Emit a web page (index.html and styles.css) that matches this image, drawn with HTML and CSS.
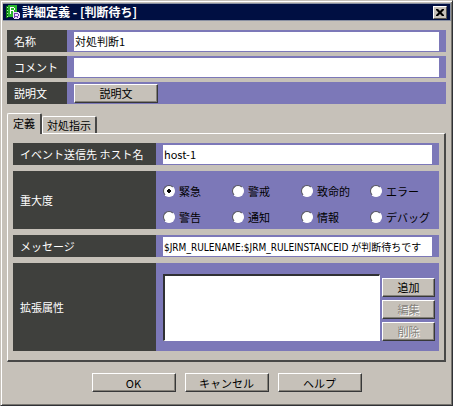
FILE: index.html
```html
<!DOCTYPE html>
<html lang="ja">
<head>
<meta charset="utf-8">
<title>詳細定義 - [判断待ち]</title>
<link rel="stylesheet" href="styles.css">
</head>
<body>
<main class="window">
  <header class="titlebar">
    <svg class="app-icon" viewBox="0 0 14 14" aria-hidden="true">
      <path fill="#087510" d="M0 1h2v12H0z"/>
      <path fill="#29b52c" d="M2 0h9v12H2z"/>
      <path fill="#b4efab" d="M1 2h1v1H1zM1 5h1v1H1zM1 8h1v1H1zM1 11h1v1H1z"/>
      <path fill="none" stroke="#fff" d="M4.5 9V2.5h3l1 1v1l-1 1h-3M6.500 5.500l2 3"/>
      <path fill="#f0dcff" d="M7 7h5l2 2v3l-2 2H8l-1-2z"/>
      <path fill="none" stroke="#7042ad" d="M8.500 13V8.500h3l1 1v1l-1 1h-3M10.500 11.500l2 2"/>
    </svg>
    <h1 class="title">詳細定義 - [判断待ち]</h1>
    <button class="close" type="button" aria-label="閉じる">
      <svg viewBox="0 0 8 7" aria-hidden="true"><path fill="#000" d="M0 0h2l2 2 2-2h2v1L5.500 3.500 8 6v1H6L4 5 2 7H0V6l2.500-2.500L0 1z"/></svg>
    </button>
  </header>
  <form class="content">
    <div class="rows">
      <div class="row">
        <label class="label" for="name">名称</label>
        <div class="field"><input class="text" id="name" type="text" value="対処判断1"></div>
      </div>
      <div class="row">
        <label class="label" for="comment">コメント</label>
        <div class="field"><input class="text" id="comment" type="text"></div>
      </div>
      <div class="row">
        <span class="label">説明文</span>
        <div class="field"><button class="button" type="button">説明文</button></div>
      </div>
    </div>
    <div class="tabs" role="tablist">
      <button class="tab selected" type="button" role="tab" aria-selected="true">定義</button>
      <button class="tab" type="button" role="tab" aria-selected="false">対処指示</button>
    </div>
    <section class="panel" role="tabpanel">
      <div class="row">
        <label class="label" for="host">イベント送信先 ホスト名</label>
        <div class="field"><input class="text" id="host" type="text" value="host-1"></div>
      </div>
      <div class="row">
        <span class="label" id="severity">重大度</span>
        <div class="field severity" role="radiogroup" aria-labelledby="severity">
          <label class="option"><input type="radio" name="severity" checked>緊急</label>
          <label class="option"><input type="radio" name="severity">警戒</label>
          <label class="option"><input type="radio" name="severity">致命的</label>
          <label class="option"><input type="radio" name="severity">エラー</label>
          <label class="option"><input type="radio" name="severity">警告</label>
          <label class="option"><input type="radio" name="severity">通知</label>
          <label class="option"><input type="radio" name="severity">情報</label>
          <label class="option"><input type="radio" name="severity">デバッグ</label>
        </div>
      </div>
      <div class="row">
        <label class="label" for="message">メッセージ</label>
        <div class="field"><input class="text message" id="message" type="text" value="$JRM_RULENAME:$JRM_RULEINSTANCEID が判断待ちです"></div>
      </div>
      <div class="row">
        <label class="label" for="attributes">拡張属性</label>
        <div class="field attributes">
          <select class="list" id="attributes" size="4"></select>
          <div class="actions">
            <button class="button" type="button">追加</button>
            <button class="button" type="button" disabled>編集</button>
            <button class="button" type="button" disabled>削除</button>
          </div>
        </div>
      </div>
    </section>
    <footer class="footer">
      <button class="button" type="button">OK</button>
      <button class="button" type="button">キャンセル</button>
      <button class="button" type="button">ヘルプ</button>
    </footer>
  </form>
</main>
</body>
</html>
```
FILE: styles.css
```css
* { box-sizing: border-box; }

body {
  margin: 0;
  background: #c6c1b9;
  color: #000;
  font: 11px/16px "Noto Sans CJK JP", sans-serif;
}

button, input, select {
  margin: 0;
  font: inherit;
  color: inherit;
}

.window {
  min-height: 100vh;
  padding: 2px 1px 2px 2px;
  border: 1px solid #c6c1b9;
  border-right-color: #303236;
  border-bottom-color: #303236;
  box-shadow: inset 1px 1px #fff, inset -1px -1px #77756f;
}

.titlebar {
  display: flex;
  align-items: center;
  gap: 2px;
  height: 18px;
  padding: 0 3px;
  border: 1px solid #8990a1;
  border-left: 0;
  background: #000f42;
  color: #fff;
}

.app-icon {
  width: 14px;
  height: 14px;
  shape-rendering: crispEdges;
}

.title {
  flex: 1;
  margin: 0;
  font-size: 12px;
  line-height: 16px;
  font-weight: 700;
}

.close {
  display: grid;
  place-items: center;
  width: 14px;
  height: 13px;
  padding: 0;
  border: 1px solid;
  border-color: #fff #55534f #55534f #fff;
  background: #c6c1b9;
}

.close svg {
  width: 8px;
  height: 7px;
}

.content { padding: 9px 5px 0 4px; }

.rows {
  display: grid;
  gap: 4px;
}

.row {
  display: grid;
  grid-template-columns: 60px 1fr;
  min-height: 22px;
}

.label {
  display: flex;
  align-items: center;
  padding-left: 7px;
  background: #3f403d;
  color: #fff;
}

.field {
  display: flex;
  align-items: center;
  min-width: 0;
  padding: 1px 7px;
  background: #7c78b8;
}

.text {
  width: 100%;
  min-width: 0;
  height: 19px;
  padding: 0 1px;
  border: 0;
  background: #fff;
}

.message {
  font-family: "DejaVu Sans Condensed", "Noto Sans CJK JP", sans-serif;
  font-size: 10px;
}

.button {
  width: 84px;
  height: 19px;
  padding: 0;
  border: 1px solid;
  border-color: #fff #373839 #373839 #fff;
  box-shadow: inset -1px -1px #858179;
  background: #c6c1b9;
  line-height: 16px;
}

.button:disabled {
  color: #85827b;
  text-shadow: 1px 1px #fff;
}

.tabs {
  display: flex;
  align-items: flex-end;
  padding-top: 9px;
}

.tab {
  height: 17px;
  padding: 0 4px;
  border: solid;
  border-width: 1px 2px 0 1px;
  border-color: #fff #484847 #fff #fff;
  border-radius: 2px 2px 0 0;
  background: #c6c1b9;
  line-height: 16px;
}

.tab.selected {
  z-index: 1;
  height: 21px;
  margin-bottom: -1px;
  padding: 0 5px 3px;
}

.panel {
  display: grid;
  gap: 6px;
  padding: 9px 5px;
  border: solid;
  border-width: 1px 2px 2px 1px;
  border-color: #fff #484847 #484847 #fff;
}

.panel .row { grid-template-columns: 143px 1fr; }

.severity {
  display: grid;
  grid-template-columns: repeat(4, 69px);
  align-content: center;
  row-gap: 10px;
  height: 58px;
  padding-top: 8px;
  padding-right: 0;
}

.option {
  display: flex;
  align-items: center;
  gap: 4px;
  white-space: nowrap;
}

.option input {
  appearance: none;
  width: 12px;
  height: 12px;
  border: 1px solid;
  border-color: #55545c #fff #fff #55545c;
  border-radius: 50%;
  background: #fff;
}

.option input:checked {
  background: radial-gradient(circle, #000 0 2px, #fff 2px);
}

.attributes {
  gap: 2px;
  height: 88px;
  padding-right: 4px;
}

.list {
  flex: 1;
  min-width: 0;
  height: 67px;
  border: solid;
  border-width: 2px 1px 1px 2px;
  border-color: #303134 #fff #fff #303134;
  border-radius: 0;
  background: #fff;
}

.actions {
  display: grid;
  gap: 3px;
  padding-top: 4px;
}

.actions .button { width: 53px; }

.footer {
  display: flex;
  justify-content: center;
  gap: 9px;
  padding-top: 11px;
}
```
